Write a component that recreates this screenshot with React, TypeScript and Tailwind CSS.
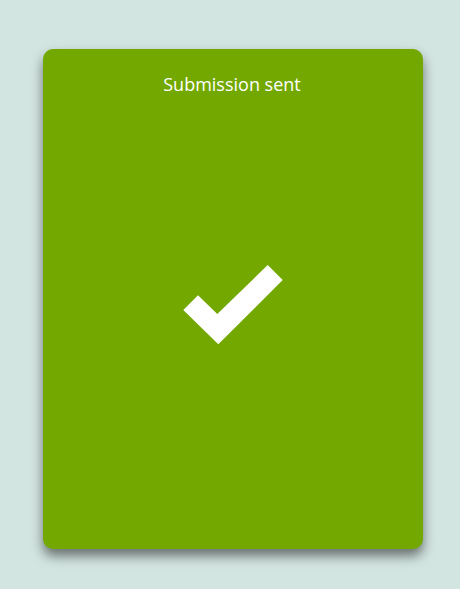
export default function App() {
  return (
    <div className="min-h-screen bg-[#d3e5e0] pt-[49px] pl-[43px] font-['Open_Sans',sans-serif]">
      <div className="w-[380px] h-[500px] rounded-[10px] bg-[#72a800] shadow-[0_7px_12px_rgba(0,0,0,0.5)] flex flex-col">
        <h1 className="pt-[21px] pr-[2px] text-center text-[18px] leading-[28px] text-white font-normal">
          Submission sent
        </h1>
        <div className="flex-1 flex items-center justify-center pb-[37px]">
          <svg width="100" height="80" viewBox="183 265 100 80">
            <polygon
              points="183.3,310 198,295.3 217.3,314 267.7,265 282.7,280 218.3,344.3"
              fill="#ffffff"
            />
          </svg>
        </div>
      </div>
    </div>
  );
}
